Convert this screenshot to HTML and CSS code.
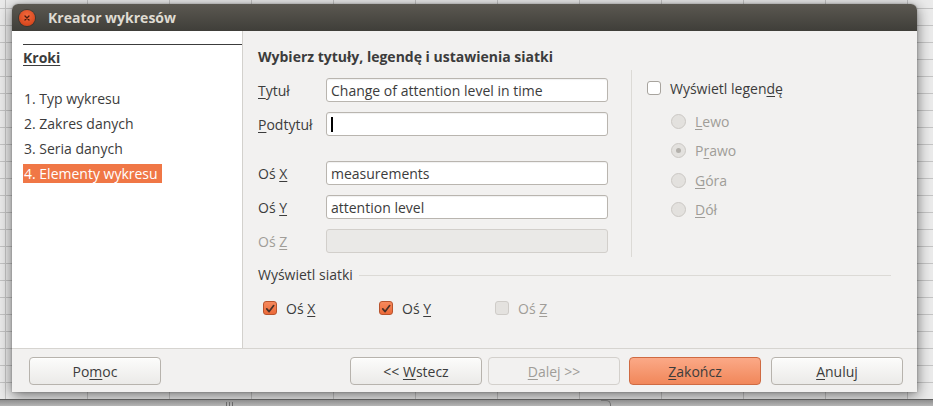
FILE: index.html
```html
<!DOCTYPE html>
<html lang="pl">
<head>
<meta charset="utf-8">
<title>Kreator wykresów</title>
<link rel="stylesheet" href="styles.css">
</head>
<body>
<div class="screen">
  <div class="window">
    <div class="titlebar">
      <span class="close">
        <svg width="16" height="16" viewBox="0 0 16 16"><path d="M6 6 L10 10 M10 6 L6 10" stroke="#4a1c0e" stroke-width="1.3" stroke-linecap="round"/></svg>
      </span>
      <span class="title">Kreator wykresów</span>
    </div>
    <div class="body">
      <div class="main">
        <aside class="steps">
          <div class="steps-rule"></div>
          <div class="steps-head">Kroki</div>
          <ul class="step-list">
            <li><span class="step">1. Typ wykresu</span></li>
            <li><span class="step">2. Zakres danych</span></li>
            <li><span class="step">3. Seria danych</span></li>
            <li><span class="step current">4. Elementy wykresu</span></li>
          </ul>
        </aside>
        <section class="page">
          <h1 class="heading">Wybierz tytuły, legendę i ustawienia siatki</h1>
          <div class="top">
            <div class="form">
              <div class="row">
                <label class="lbl"><u>T</u>ytuł</label>
                <div class="input">Change of attention level in time</div>
              </div>
              <div class="row">
                <label class="lbl"><u>P</u>odtytuł</label>
                <div class="input"><span class="caret"></span></div>
              </div>
              <div class="row spaced">
                <label class="lbl">Oś <u>X</u></label>
                <div class="input">measurements</div>
              </div>
              <div class="row">
                <label class="lbl">Oś <u>Y</u></label>
                <div class="input">attention level</div>
              </div>
              <div class="row">
                <label class="lbl disabled">Oś <u>Z</u></label>
                <div class="input off"></div>
              </div>
            </div>
            <div class="vsep"></div>
            <div class="legend">
              <div class="check-row">
                <span class="box"></span>
                <span class="check-text">Wyświetl legen<u>d</u>ę</span>
              </div>
              <div class="radio-row">
                <span class="radio"></span><span class="radio-text"><u>L</u>ewo</span>
              </div>
              <div class="radio-row">
                <span class="radio on"></span><span class="radio-text">P<u>r</u>awo</span>
              </div>
              <div class="radio-row">
                <span class="radio"></span><span class="radio-text"><u>G</u>óra</span>
              </div>
              <div class="radio-row">
                <span class="radio"></span><span class="radio-text"><u>D</u>ół</span>
              </div>
            </div>
          </div>
          <div class="grid-head">
            <span>Wyświetl siatki</span>
            <span class="grid-rule"></span>
          </div>
          <div class="grid-checks">
            <div class="gcheck">
              <span class="box checked"><svg width="14" height="14" viewBox="0 0 14 14"><path d="M3.2 6.8 L6 10 L11.3 3" fill="none" stroke="#4a3128" stroke-width="2" stroke-linecap="round" stroke-linejoin="round"/></svg></span>
              <span class="check-text">Oś <u>X</u></span>
            </div>
            <div class="gcheck">
              <span class="box checked"><svg width="14" height="14" viewBox="0 0 14 14"><path d="M3.2 6.8 L6 10 L11.3 3" fill="none" stroke="#4a3128" stroke-width="2" stroke-linecap="round" stroke-linejoin="round"/></svg></span>
              <span class="check-text">Oś <u>Y</u></span>
            </div>
            <div class="gcheck">
              <span class="box dis"></span>
              <span class="check-text disabled">Oś <u>Z</u></span>
            </div>
          </div>
        </section>
      </div>
      <div class="buttons">
        <button class="btn">Po<u>m</u>oc</button>
        <div class="btn-group">
          <button class="btn">&lt;&lt; <u>W</u>stecz</button>
          <button class="btn off"><u>D</u>alej &gt;&gt;</button>
          <button class="btn primary"><u>Z</u>akończ</button>
          <button class="btn last"><u>A</u>nuluj</button>
        </div>
      </div>
    </div>
  </div>
  <div class="tabbar">
    <span class="grip"><i></i><i></i><i></i></span>
    <span class="tab"></span>
  </div>
</div>
</body>
</html>
```

FILE: styles.css
```css
* { box-sizing: border-box; }
html, body { margin: 0; padding: 0; }
body {
  width: 933px;
  height: 406px;
  overflow: hidden;
  font-family: "Open Sans", "Noto Sans", "DejaVu Sans", sans-serif;
  font-size: 14px;
  color: #3c3c3c;
}
.screen {
  width: 933px;
  height: 406px;
  display: flex;
  flex-direction: column;
  background-color: #ebebeb;
  background-image:
    linear-gradient(to right, #c4c4c4 1px, transparent 1px),
    linear-gradient(to bottom, #c4c4c4 1px, transparent 1px);
  background-size: 82px 100%, 100% 17px;
  background-position: 5px 0, 0 8px;
}
u { text-decoration: underline; text-underline-offset: 2px; }

.window {
  margin: 4px 0 0 12px;
  width: 905px;
  height: 388px;
  display: flex;
  flex-direction: column;
  border-radius: 6px 6px 0 0;
  background: #f2f1f0;
  box-shadow: 0 3px 14px rgba(0,0,0,0.55), 0 0 2px rgba(0,0,0,0.3);
}
.titlebar {
  height: 27px;
  flex: none;
  display: flex;
  align-items: center;
  padding-left: 7px;
  border-radius: 6px 6px 0 0;
  background: linear-gradient(#5b5851, #3f3e39);
}
.close {
  width: 16px;
  height: 16px;
  border-radius: 50%;
  background: radial-gradient(circle at 50% 35%, #f2693d, #d9491f 70%, #b73b17);
  box-shadow: 0 0 0 1px rgba(40,20,10,0.35);
  display: flex;
}
.title {
  margin-left: 13px;
  font-weight: 700;
  font-size: 14px;
  color: #dfdbd2;
}
.body {
  flex: 1;
  display: flex;
  flex-direction: column;
}
.main {
  height: 318px;
  display: flex;
  border-bottom: 1px solid #d6d4d0;
}
.steps {
  width: 231px;
  flex: none;
  background: #ffffff;
  border-right: 1px solid #d3d1cd;
  padding: 13px 0 0 11px;
}
.steps-rule { height: 1px; background: #3c3c3c; }
.steps-head {
  margin-top: 4px;
  line-height: 18px;
  font-weight: 700;
  text-decoration: underline;
  text-underline-offset: 2px;
}
.step-list { list-style: none; margin: 19px 0 0; padding: 0; }
.step-list li { height: 25px; display: flex; align-items: center; }
.step { line-height: 19px; padding: 0 4px 0 1px; }
.step.current { background: #f07746; color: #ffffff; }

.page {
  flex: 1;
  padding: 17px 26px 0 15px;
  display: flex;
  flex-direction: column;
}
.heading {
  margin: 0;
  font-size: 14px;
  line-height: 18px;
  font-weight: 700;
}
.top { display: flex; margin-top: 12px; }
.form { width: 350px; display: flex; flex-direction: column; gap: 10px; }
.row { display: flex; align-items: center; height: 24px; }
.row.spaced { margin-top: 15px; }
.lbl { width: 68px; flex: none; }
.disabled { color: #a09d98; }
.input {
  flex: 1;
  height: 24px;
  border: 1px solid #b9b5af;
  border-radius: 3px;
  background: #ffffff;
  padding-left: 4px;
  display: flex;
  align-items: center;
  box-shadow: inset 0 1px 1px rgba(0,0,0,0.06);
}
.input.off { background: #eae9e7; border-color: #d2cfcb; box-shadow: none; }
.caret { width: 2px; height: 15px; background: #000000; }
.vsep {
  width: 1px;
  margin: -8px 15px 0 23px;
  height: 187px;
  background: #dcdad6;
}
.legend { display: flex; flex-direction: column; }
.check-row { display: flex; align-items: center; height: 20px; }
.box {
  width: 14px;
  height: 14px;
  flex: none;
  border: 1px solid #a8a49e;
  border-radius: 3px;
  background: #ffffff;
  display: flex;
}
.box.checked {
  border-color: #b9542d;
  background: linear-gradient(#f6895c, #ec6a39);
}
.box.dis { background: #e4e2df; border-color: #cfccc8; }
.check-text { margin-left: 9px; }
.radio-row { display: flex; align-items: center; height: 20px; margin-top: 9.5px; padding-left: 24px; }
.check-row + .radio-row { margin-top: 13px; }
.radio {
  width: 15px;
  height: 15px;
  border-radius: 50%;
  border: 1px solid #cbc8c4;
  background: #e3e1de;
  display: flex;
  align-items: center;
  justify-content: center;
}
.radio.on::after {
  content: "";
  width: 5px;
  height: 5px;
  border-radius: 50%;
  background: #b3b0ab;
}
.radio-text { margin-left: 9px; color: #a09d98; }

.grid-head {
  margin-top: 9px;
  display: flex;
  align-items: center;
  line-height: 18px;
}
.grid-rule { flex: 1; height: 1px; background: #dcdad6; margin-left: 6px; }
.grid-checks { display: flex; margin-top: 15px; padding-left: 5px; height: 18px; align-items: center; }
.gcheck { display: flex; align-items: center; width: 116px; }

.buttons {
  flex: 1;
  display: flex;
  justify-content: space-between;
  align-items: flex-start;
  padding: 8px 14px 0 17px;
}
.btn-group { display: flex; gap: 6px; }
.btn {
  width: 132px;
  height: 28px;
  font: inherit;
  color: #3c3c3c;
  border: 1px solid #b7b3ad;
  border-radius: 4px;
  background: linear-gradient(#fcfcfb, #ebeae8);
  box-shadow: inset 0 1px 0 rgba(255,255,255,0.8);
  padding: 0;
}
.btn.off { color: #a09d98; background: #f2f1f0; border-color: #d3d0cc; box-shadow: none; }
.btn.primary {
  margin-left: 3px;
  background: linear-gradient(#fba987, #f1875a);
  border-color: #cf6a42;
  box-shadow: none;
}
.btn.last { margin-left: 4px; }

.tabbar {
  margin-top: auto;
  height: 7px;
  border-top: 1px solid #5c5c5c;
  background: linear-gradient(#8e8e8e, #b5b5b5);
  display: flex;
  padding-left: 226px;
}
.grip { display: flex; gap: 2px; padding-top: 2px; }
.grip i { width: 1px; height: 4px; background: #6a6a6a; }
.tab {
  margin-left: 368px;
  width: 10px;
  height: 6px;
  border-top: 1px solid #707070;
  border-right: 1px solid #707070;
  border-radius: 0 5px 0 0;
}
```
